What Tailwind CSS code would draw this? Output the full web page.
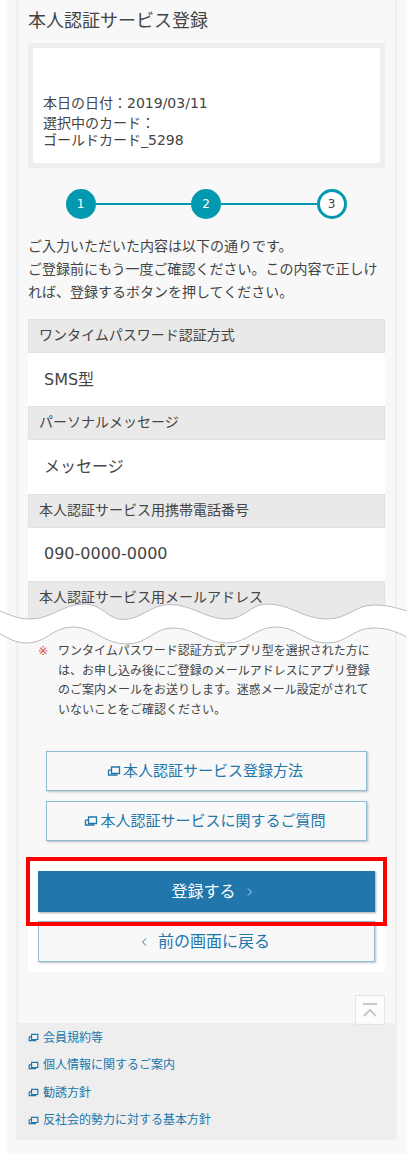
<!DOCTYPE html>
<html lang="ja">
<head>
    <meta charset="UTF-8">
    <title>本人認証サービス登録</title>
    <script src="https://cdn.jsdelivr.net/npm/@tailwindcss/browser@4"></script>
</head>
<body class="bg-white font-['DejaVu_Sans','Noto_Sans_CJK_JP',sans-serif] text-[#444]">
    <div class="relative h-[1154px] w-[407px] overflow-hidden">
        <div class="ml-[7px] h-full bg-[#f8f8f8] pl-[10px] pr-[11px]">
            <div class="flex h-[1138px] flex-col border-x border-b border-[#ececec] shadow-[0_1px_2px_rgba(0,0,0,0.08)]">
                <div class="flex-1 px-[10px]">
                    <h1 class="pt-[8px] text-[18px] leading-[26px] font-normal">本人認証サービス登録</h1>

                    <div class="mt-[9px] h-[125px] border-[5px] border-[#eeeeee] bg-white pt-[45px] pl-[10px] text-[14px]">
                        <p class="leading-[20px]">本日の日付：2019/03/11</p>
                        <p class="mt-[2px] leading-[17px]">選択中のカード：<br>ゴールドカード_5298</p>
                    </div>

                    <div class="mt-[21px] flex items-center justify-center pr-[1px]">
                        <div class="flex size-[30px] items-center justify-center rounded-full bg-[#0099b0] text-[12px] text-white">1</div>
                        <div class="h-[2px] w-[95.5px] bg-[#0099b0]"></div>
                        <div class="flex size-[30px] items-center justify-center rounded-full bg-[#0099b0] text-[12px] text-white">2</div>
                        <div class="h-[2px] w-[95.5px] bg-[#0099b0]"></div>
                        <div class="flex size-[30px] items-center justify-center rounded-full border-[3px] border-[#0099b0] bg-white text-[12px]">3</div>
                    </div>

                    <p class="mt-[16px] text-[14px] leading-[23px]">ご入力いただいた内容は以下の通りです。<br>ご登録前にもう一度ご確認ください。この内容で正しければ、登録するボタンを押してください。</p>

                    <dl class="mt-[15px] h-[301px]">
                        <dt class="h-[34px] border border-[#e2e2e2] bg-[#e9e9e9] pl-[10px] text-[14px] leading-[31px]">ワンタイムパスワード認証方式</dt>
                        <dd class="flex h-[53.3px] items-center bg-white pl-[16px] text-[16px]">SMS型</dd>
                        <dt class="h-[34px] border border-[#e2e2e2] bg-[#e9e9e9] pl-[10px] text-[14px] leading-[31px]">パーソナルメッセージ</dt>
                        <dd class="flex h-[53.3px] items-center bg-white pl-[16px] text-[16px]">メッセージ</dd>
                        <dt class="h-[34px] border border-[#e2e2e2] bg-[#e9e9e9] pl-[10px] text-[14px] leading-[31px]">本人認証サービス用携帯電話番号</dt>
                        <dd class="flex h-[53.3px] items-center bg-white pl-[16px] text-[16px]">090-0000-0000</dd>
                        <dt class="h-[39px] border border-[#e2e2e2] bg-[#e9e9e9] pl-[10px] text-[14px] leading-[31px]">本人認証サービス用メールアドレス</dt>
                    </dl>

                    <p class="relative mt-[22px] pr-[12px] pl-[30px] text-[12px] leading-[19.5px]"><span class="absolute left-[10px] text-[#d9534f]">※</span>ワンタイムパスワード認証方式アプリ型を選択された方には、お申し込み後にご登録のメールアドレスにアプリ登録のご案内メールをお送りします。迷惑メール設定がされていないことをご確認ください。</p>

                    <div class="mt-[31px] flex flex-col gap-[10px] px-[18px]">
                        <a class="flex h-[40px] items-center justify-center gap-[2px] border border-[#8dbcd6] pr-[3px] text-[15px] text-[#2176ab] shadow-[1px_1px_2px_rgba(0,0,0,0.25)]">
                            <svg class="size-[14px]" viewBox="0 0 14 14" fill="none" stroke="currentColor" stroke-width="1.3"><path d="M4.5 3h8v6.5h-8z"/><path d="M1.5 6v5h9"/><path d="M1.5 6h3"/></svg>
                            本人認証サービス登録方法
                        </a>
                        <a class="flex h-[40px] items-center justify-center gap-[2px] border border-[#8dbcd6] pr-[3px] text-[15px] text-[#2176ab] shadow-[1px_1px_2px_rgba(0,0,0,0.25)]">
                            <svg class="size-[14px]" viewBox="0 0 14 14" fill="none" stroke="currentColor" stroke-width="1.3"><path d="M4.5 3h8v6.5h-8z"/><path d="M1.5 6v5h9"/><path d="M1.5 6h3"/></svg>
                            本人認証サービスに関するご質問
                        </a>
                    </div>

                    <div class="mt-[15px] h-[116px] bg-white px-[10px] pt-[15px]">
                        <a class="flex h-[41px] items-center justify-center gap-[10px] bg-[#2176ab] pl-[12px] text-[16px] text-white shadow-[1px_1px_2px_rgba(0,0,0,0.35)]">
                            登録する
                            <svg class="size-[8px]" viewBox="0 0 8 8" fill="none" stroke="#bcd6e6" stroke-width="1"><path d="M2 0.5 5.5 4 2 7.5"/></svg>
                        </a>
                        <a class="mt-[9px] flex h-[41px] items-center justify-center gap-[10px] border border-[#8dbcd6] bg-[#f8f8f8] pr-[3px] text-[16px] text-[#2176ab] shadow-[1px_1px_2px_rgba(0,0,0,0.25)]">
                            <svg class="size-[8px]" viewBox="0 0 8 8" fill="none" stroke="currentColor" stroke-width="1"><path d="M6 0.5 2.5 4 6 7.5"/></svg>
                            前の画面に戻る
                        </a>
                    </div>
                </div>

                <div class="relative h-[114px] bg-[#eeeeee] px-[10px] pt-[1px] text-[12px] text-[#2176ab]">
                    <a class="absolute -top-[28px] right-[10px] flex size-[30px] items-center justify-center border border-[#e4e4e4] bg-white/60">
                        <svg class="size-[16px]" viewBox="0 0 16 16" fill="none" stroke="#c8c8c8" stroke-width="2"><path d="M1 2h14"/><path d="M2 14l6-6 6 6"/></svg>
                    </a>
                    <ul class="flex flex-col">
                        <li class="flex h-[27.5px] items-center gap-[4px]">
                            <svg class="size-[11px]" viewBox="0 0 14 14" fill="none" stroke="currentColor" stroke-width="1.5"><path d="M4.5 3h8v6.5h-8z"/><path d="M1.5 6v5h9"/><path d="M1.5 6h3"/></svg>
                            会員規約等
                        </li>
                        <li class="flex h-[27.5px] items-center gap-[4px]">
                            <svg class="size-[11px]" viewBox="0 0 14 14" fill="none" stroke="currentColor" stroke-width="1.5"><path d="M4.5 3h8v6.5h-8z"/><path d="M1.5 6v5h9"/><path d="M1.5 6h3"/></svg>
                            個人情報に関するご案内
                        </li>
                        <li class="flex h-[27.5px] items-center gap-[4px]">
                            <svg class="size-[11px]" viewBox="0 0 14 14" fill="none" stroke="currentColor" stroke-width="1.5"><path d="M4.5 3h8v6.5h-8z"/><path d="M1.5 6v5h9"/><path d="M1.5 6h3"/></svg>
                            勧誘方針
                        </li>
                        <li class="flex h-[27.5px] items-center gap-[4px]">
                            <svg class="size-[11px]" viewBox="0 0 14 14" fill="none" stroke="currentColor" stroke-width="1.5"><path d="M4.5 3h8v6.5h-8z"/><path d="M1.5 6v5h9"/><path d="M1.5 6h3"/></svg>
                            反社会的勢力に対する基本方針
                        </li>
                    </ul>
                </div>
            </div>
        </div>

        <!-- torn-page wave laid over the table -->
        <svg class="absolute top-[595px] left-0 h-[50px] w-[407px]" viewBox="0 0 407 50">
            <path d="M0 16C10 20 18 24 30 24C52 24 62 9 85 9C102 9 108 24.5 123 24.5C142 24.5 150 9.5 170 9.5C192 9.5 205 24 227 24C245 24 250 9 267 9C292 9 302 24 327 24C348 24 355 10 374 10C387 10 397 13 407 16L407 42C397 37 387 33 374 33C352 33 348 48 327 48C305 48 298 32 276 32C255 32 248 48 227 48C205 48 195 33 173 33C153 33 148 49 127 49C103 49 95 32 73 32C52 32 47 48 27 48C15 48 8 43 0 39Z" fill="white"/>
            <path d="M0 16C10 20 18 24 30 24C52 24 62 9 85 9C102 9 108 24.5 123 24.5C142 24.5 150 9.5 170 9.5C192 9.5 205 24 227 24C245 24 250 9 267 9C292 9 302 24 327 24C348 24 355 10 374 10C387 10 397 13 407 16" fill="none" stroke="#bbbbbb"/>
            <path d="M407 42C397 37 387 33 374 33C352 33 348 48 327 48C305 48 298 32 276 32C255 32 248 48 227 48C205 48 195 33 173 33C153 33 148 49 127 49C103 49 95 32 73 32C52 32 47 48 27 48C15 48 8 43 0 39" fill="none" stroke="#bbbbbb"/>
        </svg>

        <!-- red annotation frame -->
        <div class="absolute top-[857px] left-[26px] h-[69px] w-[361px] border-[4px] border-[#ff0000]"></div>
    </div>
</body>
</html>
